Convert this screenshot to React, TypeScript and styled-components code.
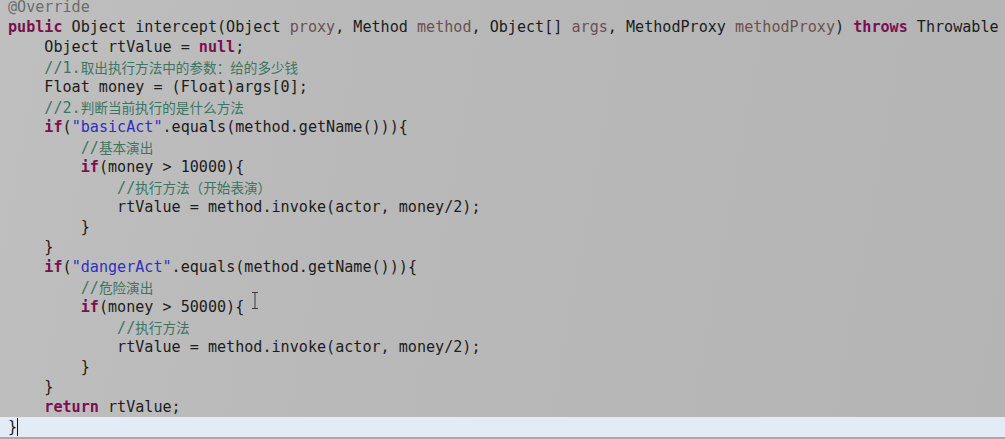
import React from "react";
import styled, { createGlobalStyle } from "styled-components";

const Global = createGlobalStyle`
  html, body { margin: 0; padding: 0; background: #b7b7b7; overflow: hidden; }
  #root { width: 1005px; height: 439px; }
`;

const Editor = styled.div`
  position: relative;
  width: 1005px;
  height: 439px;
  overflow: hidden;
  display: flex;
  flex-direction: column;
  background: linear-gradient(100deg, #bfbfbf 0%, #b9b9b9 35%, #b4b4b4 100%);
  font-family: "DejaVu Sans Mono", "Liberation Mono", monospace;
  font-size: 15.1px;
  color: #1c1c1c;
`;

const Code = styled.div`
  display: flex;
  flex-direction: column;
  margin-top: -3px;
`;

const Line = styled.div<{ $current?: boolean }>`
  height: 20px;
  line-height: 20px;
  padding-left: 8px;
  white-space: pre;
  display: flex;
  align-items: center;
  background: ${(p) => (p.$current ? "#e3ebf7" : "transparent")};
`;

const Footer = styled.div`
  height: 2px;
  background: #a9a9a9;
`;

const Kw = styled.span`
  color: #7a0f4f;
  font-weight: bold;
`;
const Str = styled.span`
  color: #2f2fbf;
`;
const Param = styled.span`
  color: #6b5050;
`;
const Anno = styled.span`
  color: #6c6c6c;
`;
const Comment = styled.span`
  color: #3b7562;
`;
const Cjk = styled.span`
  font-family: "Noto Sans CJK SC", "Noto Sans", sans-serif;
  font-size: 13.6px;
`;

const Caret = styled.span`
  display: inline-block;
  width: 1px;
  height: 18px;
  background: #111;
  margin-left: 0px;
`;

const IBeam = styled.svg`
  position: absolute;
  left: 251px;
  top: 291px;
`;

type Tok = { t: string; k?: "kw" | "str" | "param" | "anno" | "comment" };

const renderComment = (text: string, key: number) => {
  const parts = text.match(/[\x00-\x7f]+|[^\x00-\x7f]+/g) || [];
  return (
    <Comment key={key}>
      {parts.map((p, i) => (/^[\x00-\x7f]+$/.test(p) ? <span key={i}>{p}</span> : <Cjk key={i}>{p}</Cjk>))}
    </Comment>
  );
};

const renderTok = (tok: Tok, i: number) => {
  switch (tok.k) {
    case "kw":
      return <Kw key={i}>{tok.t}</Kw>;
    case "str":
      return <Str key={i}>{tok.t}</Str>;
    case "param":
      return <Param key={i}>{tok.t}</Param>;
    case "anno":
      return <Anno key={i}>{tok.t}</Anno>;
    case "comment":
      return renderComment(tok.t, i);
    default:
      return <span key={i}>{tok.t}</span>;
  }
};

const I1 = "    ";
const I2 = "        ";
const I3 = "            ";

const lines: Tok[][] = [
  [{ t: "@Override", k: "anno" }],
  [
    { t: "public", k: "kw" },
    { t: " Object intercept(Object " },
    { t: "proxy", k: "param" },
    { t: ", Method " },
    { t: "method", k: "param" },
    { t: ", Object[] " },
    { t: "args", k: "param" },
    { t: ", MethodProxy " },
    { t: "methodProxy", k: "param" },
    { t: ") " },
    { t: "throws", k: "kw" },
    { t: " Throwable" },
  ],
  [{ t: I1 + "Object rtValue = " }, { t: "null", k: "kw" }, { t: ";" }],
  [{ t: I1 }, { t: "//1.取出执行方法中的参数：给的多少钱", k: "comment" }],
  [{ t: I1 + "Float money = (Float)args[0];" }],
  [{ t: I1 }, { t: "//2.判断当前执行的是什么方法", k: "comment" }],
  [{ t: I1 }, { t: "if", k: "kw" }, { t: "(" }, { t: '"basicAct"', k: "str" }, { t: ".equals(method.getName())){" }],
  [{ t: I2 }, { t: "//基本演出", k: "comment" }],
  [{ t: I2 }, { t: "if", k: "kw" }, { t: "(money > 10000){" }],
  [{ t: I3 }, { t: "//执行方法（开始表演）", k: "comment" }],
  [{ t: I3 + "rtValue = method.invoke(actor, money/2);" }],
  [{ t: I2 + "}" }],
  [{ t: I1 + "}" }],
  [{ t: I1 }, { t: "if", k: "kw" }, { t: "(" }, { t: '"dangerAct"', k: "str" }, { t: ".equals(method.getName())){" }],
  [{ t: I2 }, { t: "//危险演出", k: "comment" }],
  [{ t: I2 }, { t: "if", k: "kw" }, { t: "(money > 50000){" }],
  [{ t: I3 }, { t: "//执行方法", k: "comment" }],
  [{ t: I3 + "rtValue = method.invoke(actor, money/2);" }],
  [{ t: I2 + "}" }],
  [{ t: I1 + "}" }],
  [{ t: I1 }, { t: "return", k: "kw" }, { t: " rtValue;" }],
];

export default function App() {
  return (
    <>
      <Global />
      <Editor>
        <Code>
          {lines.map((toks, i) => (
            <Line key={i}>{toks.map(renderTok)}</Line>
          ))}
          <Line $current>
            <span>{"}"}</span>
            <Caret />
          </Line>
        </Code>
        <Footer />
        <IBeam width="8" height="19" viewBox="0 0 8 19">
          <path d="M1 1.5 H3 M5 1.5 H7 M4 2 V17 M1 17.5 H3 M5 17.5 H7 M3 1.5 H5 M3 17.5 H5" stroke="#3a3a3a" strokeWidth="1" fill="none" />
        </IBeam>
      </Editor>
    </>
  );
}
